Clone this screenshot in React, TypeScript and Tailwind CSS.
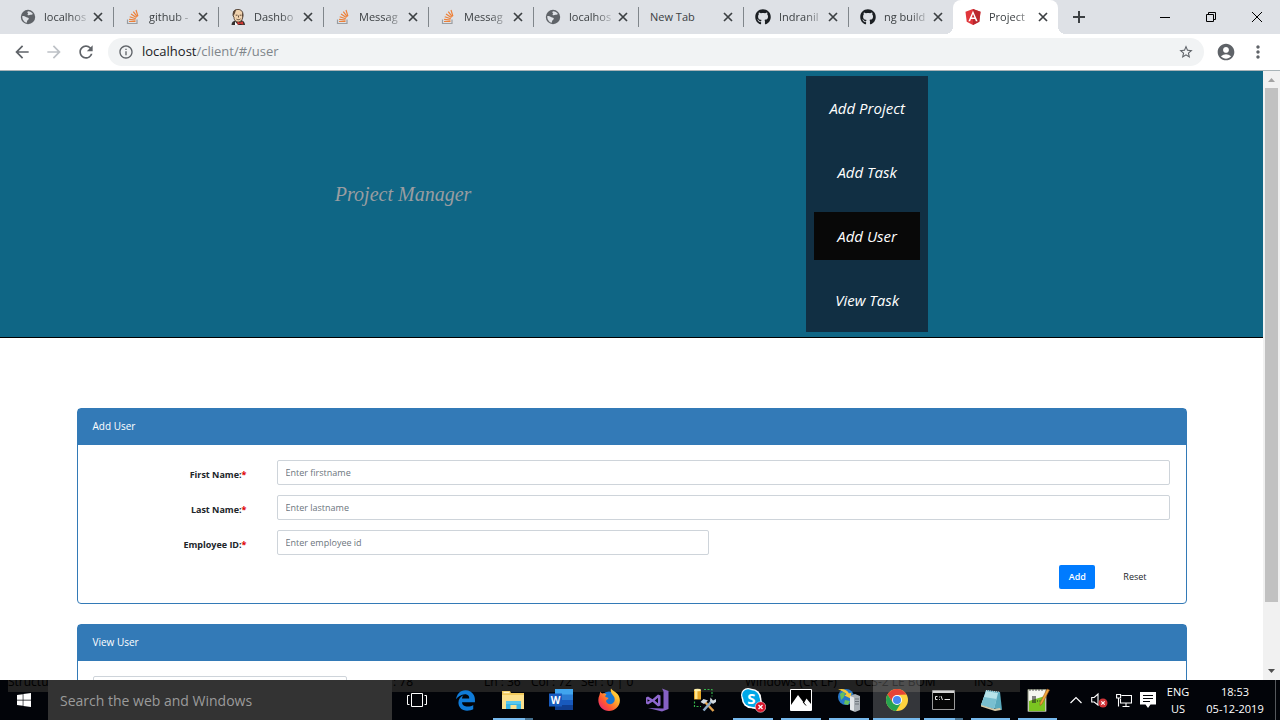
import type { ReactNode } from "react";
import { FaGithub, FaWindows, FaEdgeLegacy } from "react-icons/fa";
import {
  MdAccountCircle,
  MdArrowBack,
  MdArrowForward,
  MdInfoOutline,
  MdMoreVert,
  MdRefresh,
  MdStarBorder,
} from "react-icons/md";

function GlobeIcon() {
  return (
    <svg viewBox="0 0 16 16" className="size-4">
      <circle cx="8" cy="8" r="7.200" fill="#5f6368" />
      <path
        d="M2.300 7C3.600 6.900 5 7.200 5.800 8c.8.700 2.200.3 2.800 1.100.6.800-.2 1.600-1 2.200-.6.500-.5 1.600-.9 2.500C4 13 2 10.400 2.300 7Z M8 2.200c2 0 4 1.100 5 2.800-.7.200-1.300.9-2.100.8-1-.1-1.700.7-2.700.4-.9-.2-.8-1.100-.1-1.500.5-.4-.6-.6-.7-1.200 0-.5.200-1 .6-1.300Z"
        fill="#dee1e6"
      />
    </svg>
  );
}

function StackIcon() {
  return (
    <svg viewBox="0 0 16 16" className="size-4" fill="none">
      <path d="M2.500 10.500v4h9.500v-4" stroke="#9a9da1" strokeWidth="1.200" />
      <path
        d="M4 12.500h6.500M4.100 10.300l6.400.9M4.700 7.700l6.100 2.100M6 5l5.400 3.600M8.300 2.700l4 5.100M11 1l1.900 6.100"
        stroke="#ec8039"
        strokeWidth="1.200"
      />
    </svg>
  );
}

function JenkinsIcon() {
  return (
    <svg viewBox="0 0 16 16" className="size-4">
      <path d="M1.500 16c0-3 2-4 4-4.500l5-.5c2.500.5 4.500 2 4.500 5Z" fill="#33302e" />
      <path d="M3.500 4C3.500 1.500 5.500.4 8 .4s5 1.500 5 5-.8 7-4 7.600C6 13.500 4 11 4 8.500L3 6.500Z" fill="#f0d2ae" stroke="#4a3a2e" strokeWidth=".9" />
      <path d="M3.300 7C1.800 3.500 3.500.6 7 .4 5 1.800 5.600 3.300 4.600 5Z" fill="#5a4536" />
      <path d="M12.200 3.500c1.200 1 1.300 3 .6 5l-.8-2Z" fill="#5a4536" />
      <path d="M5.700 6.200h1.800M9.700 6.200h1.800M8.500 6.500v2M6.500 10.200c1.500.8 3 .6 4-.3" stroke="#55402f" strokeWidth=".9" fill="none" />
      <path d="m7.500 12.500 2.200 1.200 3-1.500.8 3.600-3.500-1-2.600 1.200Z" fill="#d33833" />
      <path d="m5 12.500 3 3.500H5Z" fill="#fff" />
    </svg>
  );
}

function AngularIcon() {
  return (
    <svg viewBox="0 0 16 16" className="size-4">
      <path d="m8 0 7.500 2.700-1.200 10L8 16l-6.300-3.300-1.200-10Z" fill="#e0363b" />
      <path d="M8 0v16l6.300-3.300 1.200-10Z" fill="#b9272e" />
      <path d="M8 1.800 3.400 12.200h1.700l.9-2.300h4l.9 2.300h1.700Zm0 3.200 1.400 3.500H6.600Z" fill="#fff" fillRule="evenodd" />
    </svg>
  );
}

type Tab = { title: string; icon?: ReactNode; active?: boolean };

const tabs: Tab[] = [
  { title: "localhos", icon: <GlobeIcon /> },
  { title: "github -", icon: <StackIcon /> },
  { title: "Dashbo", icon: <JenkinsIcon /> },
  { title: "Messag", icon: <StackIcon /> },
  { title: "Messag", icon: <StackIcon /> },
  { title: "localhos", icon: <GlobeIcon /> },
  { title: "New Tab" },
  { title: "Indranil", icon: <FaGithub className="size-4 text-[#1b1f23]" /> },
  { title: "ng build", icon: <FaGithub className="size-4 text-[#1b1f23]" /> },
  { title: "Project", icon: <AngularIcon />, active: true },
];

function BrowserTab({ tab, last }: { tab: Tab; last: boolean }) {
  return (
    <div
      className={
        tab.active
          ? "relative flex h-[34px] w-[105px] shrink-0 items-center rounded-t-lg bg-white pr-2 pl-3"
          : "relative flex h-[34px] w-[105px] shrink-0 items-center pr-2 pl-3"
      }
    >
      {tab.active && (
        <>
          <span className="absolute bottom-0 -left-2 size-2 bg-[radial-gradient(circle_at_0_0,transparent_8px,white_8px)]" />
          <span className="absolute -right-2 bottom-0 size-2 bg-[radial-gradient(circle_at_100%_0,transparent_8px,white_8px)]" />
        </>
      )}
      {tab.icon && <span className="mr-2 shrink-0">{tab.icon}</span>}
      <span
        className={
          tab.icon
            ? "min-w-0 flex-1 text-[11px] whitespace-nowrap text-[#3c4043] [mask-image:linear-gradient(to_right,black_55%,transparent)]"
            : "min-w-0 flex-1 text-[11px] whitespace-nowrap text-[#3c4043]"
        }
      >
        {tab.title}
      </span>
      <button type="button" aria-label={`Close ${tab.title}`} className="shrink-0 text-[#3c4043]">
        <svg viewBox="0 0 14 14" className="size-[14px]" stroke="currentColor" strokeWidth="1.700">
          <path d="m3 3 8 8M11 3l-8 8" />
        </svg>
      </button>
      {!tab.active && !last && <span className="absolute top-[7px] -right-px h-5 w-px bg-[#80868b]" />}
    </div>
  );
}

function TabStrip() {
  return (
    <div className="flex h-[34px] shrink-0 items-center bg-[#dee1e6] pl-2">
      {tabs.map((tab, i) => (
        <BrowserTab key={i} tab={tab} last={i === tabs.length - 2} />
      ))}
      <button type="button" aria-label="New tab" className="ml-3 text-[#3c4043]">
        <svg viewBox="0 0 18 18" className="size-[18px]" stroke="currentColor" strokeWidth="2">
          <path d="M9 3v12M3 9h12" />
        </svg>
      </button>
      <div className="ml-auto flex h-[28px] text-black">
        <button type="button" aria-label="Minimize" className="flex w-[46px] items-center justify-center">
          <svg viewBox="0 0 10 10" className="size-[10px]" stroke="currentColor">
            <path d="M0 5.500h10" />
          </svg>
        </button>
        <button type="button" aria-label="Restore" className="flex w-[46px] items-center justify-center">
          <svg viewBox="0 0 10 10" className="size-[10px]" stroke="currentColor" fill="none">
            <path d="M.5 2.500h7v7h-7zM2.500 2.500v-2h7v7h-2" />
          </svg>
        </button>
        <button type="button" aria-label="Close window" className="flex w-[46px] items-center justify-center">
          <svg viewBox="0 0 10 10" className="size-[10px]" stroke="currentColor">
            <path d="m0 0 10 10M10 0 0 10" />
          </svg>
        </button>
      </div>
    </div>
  );
}

function Toolbar() {
  return (
    <div className="flex h-[37px] shrink-0 items-center border-b border-[#a9b4b8] bg-white pl-3 text-[#5f6368]">
      <button type="button" aria-label="Back" className="mr-3">
        <MdArrowBack className="size-5" />
      </button>
      <button type="button" aria-label="Forward" className="mr-3 text-[#bdc1c6]">
        <MdArrowForward className="size-5" />
      </button>
      <button type="button" aria-label="Reload">
        <MdRefresh className="size-5" />
      </button>
      <div className="mr-3 ml-3 flex h-7 flex-1 items-center rounded-full bg-[#f1f3f4] pr-[10px] pl-[10px]">
        <MdInfoOutline className="mr-2 size-4" />
        <span className="flex-1 text-[13px] text-[#80868b]">
          <span className="text-[#202124]">localhost</span>/client/#/user
        </span>
        <button type="button" aria-label="Bookmark this page">
          <MdStarBorder className="size-4" />
        </button>
      </div>
      <button type="button" aria-label="Profile" className="mr-3">
        <MdAccountCircle className="size-5" />
      </button>
      <button type="button" aria-label="Menu" className="mr-3">
        <MdMoreVert className="size-5" />
      </button>
    </div>
  );
}

const links = ["Add Project", "Add Task", "Add User", "View Task"];

function SiteHeader() {
  return (
    <header className="flex items-center justify-evenly border-b border-black bg-[#0f6685] py-[5px]">
      <span className="pb-5 font-['Liberation_Serif',serif] text-[20px] text-[#9a9da1] italic">Project Manager</span>
      <nav className="bg-[#112f43]">
        <ul>
          {links.map((name) => (
            <li key={name} className="p-2">
              <a
                href="#/user"
                className={
                  name === "Add User"
                    ? "flex h-12 w-[106px] items-center justify-center bg-[#080808] text-[15px] text-white italic"
                    : "flex h-12 w-[106px] items-center justify-center text-[15px] text-white italic"
                }
              >
                {name}
              </a>
            </li>
          ))}
        </ul>
      </nav>
    </header>
  );
}

function Panel({ title, children }: { title: string; children: ReactNode }) {
  return (
    <section className="mb-5 rounded border border-[#337ab7] bg-white">
      <h2 className="h-9 bg-[#337ab7] px-[15px] text-[10px] leading-[34px] text-white">{title}</h2>
      {children}
    </section>
  );
}

const fields = [
  { id: "firstname", label: "First Name:", hint: "Enter firstname", short: false },
  { id: "lastname", label: "Last Name:", hint: "Enter lastname", short: false },
  { id: "employee", label: "Employee ID:", hint: "Enter employee id", short: true },
];

function UserForm() {
  return (
    <form className="px-4 pt-[15px] pb-[14px]" onSubmit={(e) => e.preventDefault()}>
      {fields.map((f) => (
        <div key={f.id} className="mb-[10px] flex items-center">
          <label htmlFor={f.id} className="mr-[30px] w-[153px] pt-1 text-right text-[9px] font-bold text-[#212529]">
            {f.label}
            <span className="text-[#e00000]">*</span>
          </label>
          <div className="flex-1">
            <input
              id={f.id}
              type="text"
              placeholder={f.hint}
              className={
                f.short
                  ? "block h-[25px] w-[432px] rounded-xs border border-[#ced4da] px-2 text-[9px] placeholder:text-[#6c757d]"
                  : "block h-[25px] w-full rounded-xs border border-[#ced4da] px-2 text-[9px] placeholder:text-[#6c757d]"
              }
            />
          </div>
        </div>
      ))}
      <div className="flex justify-end gap-5 pr-[15px]">
        <button type="submit" className="h-6 w-9 rounded-xs bg-[#007bff] text-[9px] font-semibold text-white">
          Add
        </button>
        <button type="reset" className="h-6 px-2 text-[9px] text-[#212529]">
          Reset
        </button>
      </div>
    </form>
  );
}

function ScrollBar() {
  return (
    <div className="flex w-[17px] shrink-0 flex-col items-center bg-[#f1f1f1]">
      <svg viewBox="0 0 17 17" className="size-[17px]">
        <path d="M5 11h7L8.500 7Z" fill="#a3a3a3" />
      </svg>
      <div className="h-[514px] w-[13px] bg-[#c1c1c1]" />
      <svg viewBox="0 0 17 17" className="mt-auto size-[17px]">
        <path d="M5 6h7L8.500 10Z" fill="#505050" />
      </svg>
    </div>
  );
}

function EditorStatus() {
  return (
    <div className="absolute top-0 left-2 flex h-3 w-[1012px] items-end overflow-hidden bg-[#222222] text-[12px] whitespace-nowrap text-black">
      <div className="flex h-5 items-center">
        <span className="w-[385px]">Structu</span>
        <span className="w-[91px]">: 78</span>
        <span className="w-[47px]">Ln : 36</span>
        <span className="w-[50px]">Col : 72</span>
        <span className="w-[164px]">Sel : 0 | 0</span>
        <span className="w-[110px]">Windows (CR LF)</span>
        <span className="w-[119px]">UCS-2 LE BOM</span>
        <span>INS</span>
      </div>
    </div>
  );
}

type TaskApp = { name: string; icon: ReactNode; running?: boolean; stacked?: boolean; current?: boolean };

const apps: TaskApp[] = [
  {
    name: "Task View",
    icon: (
      <svg viewBox="0 0 24 24" className="size-6" fill="none" stroke="#fff">
        <path d="M6.500 5.500h11v13h-11zM4.500 7.500h-2v9h2M19.500 7.500h2v9h-2" />
      </svg>
    ),
  },
  { name: "Edge", icon: <FaEdgeLegacy className="size-[21px] text-[#0f7bd8]" /> },
  {
    name: "File Explorer",
    stacked: true,
    icon: (
      <svg viewBox="0 0 24 24" className="size-6">
        <path d="M1 3h8l1 2h13v16H1Z" fill="#f0c95c" />
        <path d="M2.500 3.800h6v1.400h-6Z" fill="#fff3c4" />
        <path d="M1 7h22v14H1Z" fill="#fbe08d" />
        <path d="M5 21v-8h15v8h-4.500v-4h-6v4Z" fill="#38b5e6" />
        <path d="M5 13h15v3H5Z" fill="#58c7ee" />
      </svg>
    ),
  },
  {
    name: "Word",
    icon: (
      <svg viewBox="0 0 24 24" className="size-6">
        <path d="M6 1h18v6H6Z" fill="#41a5ee" />
        <path d="M6 6.500h18V12H6Z" fill="#2b7cd3" />
        <path d="M6 12h18v5.500H6Z" fill="#185abd" />
        <path d="M6 17h18v5H6Z" fill="#103f91" />
        <rect y="5.500" width="13" height="13" fill="#185abd" />
        <text x="6.500" y="15.500" textAnchor="middle" fontSize="10" fontWeight="700" fill="#fff">
          W
        </text>
      </svg>
    ),
  },
  {
    name: "Firefox",
    icon: (
      <svg viewBox="0 0 24 24" className="size-6">
        <defs>
          <linearGradient id="fox" x1="1" y1="0" x2="0" y2="1">
            <stop offset="0" stopColor="#fff14f" />
            <stop offset=".35" stopColor="#ffb02c" />
            <stop offset=".65" stopColor="#ff5a30" />
            <stop offset="1" stopColor="#e31587" />
          </linearGradient>
        </defs>
        <circle cx="12" cy="12.500" r="9" fill="#1675d1" />
        <path
          d="M14 .5c1 2 4 3 6.500 5.500 4 5 2.500 11-1 14-4 4-11 4-15 0C1 16.500.5 11 2.500 7l.8-3.500C4 5 4.700 5.300 5.500 5.500 7 5 8.500 5.500 9.500 6.500c-1 .5-1.500 1.500-1 2.500 1 .5 2.500.5 3 1-.5 1.500-2 1.500-2.500 3 .5 3 4 4 6.500 2.500 3-2 2.500-5.500 1-7.500C15 6 13 4 14 .5Z"
          fill="url(#fox)"
        />
      </svg>
    ),
  },
  {
    name: "Visual Studio",
    icon: (
      <svg viewBox="0 0 24 24" className="size-6">
        <path d="m17 .5 6.500 2.500v18L17 23.500 3 20l15.500.5v-17Z" fill="#8661c5" />
        <path
          d="M1 9.500 3 8.500l4.500 2.700L13 6.500l2.500 1v10l-2.500 1-5.500-4.700L3 16.500l-2-1Zm1.500 1.700v2.600L5 12.500Zm7.200 1.300 3.300 2.700v-5.400Z"
          fill="#8f68cf"
          fillRule="evenodd"
        />
      </svg>
    ),
  },
  {
    name: "Database Tools",
    icon: (
      <svg viewBox="0 0 24 24" className="size-6">
        <path d="M1 2h7v9.500H1Z" fill="#e6a726" />
        <path d="M2 2h2.500v9H2Z" fill="#ffe388" />
        <ellipse cx="4.500" cy="2" rx="3.500" ry="1.300" fill="#fff0a9" />
        <path d="M11 1.500h8v7M1.500 13.500v5H8" fill="none" stroke="#35b34a" strokeWidth="1.200" strokeDasharray="2 1.500" />
        <path d="m12 14 8.500 9" stroke="#e1a14c" strokeWidth="2.500" />
        <path d="m10.500 22.500 8-9" stroke="#8aaac7" strokeWidth="2.500" />
        <path d="m7.500 14 3-3 4.500 1.500-4 3.500Zm10-4.500 2.500 3 3-1.500v3l-3 2-3-3Z" fill="#d1d9e0" />
      </svg>
    ),
  },
  {
    name: "Skype",
    running: true,
    icon: (
      <svg viewBox="0 0 26 26" className="size-[26px]">
        <circle cx="8" cy="8" r="7" fill="#fff" />
        <circle cx="15" cy="15" r="7" fill="#fff" />
        <circle cx="11.500" cy="11.500" r="9.800" fill="#fff" />
        <circle cx="8" cy="8" r="5.800" fill="#00a8e8" />
        <circle cx="14.500" cy="14.500" r="5.800" fill="#00a8e8" />
        <circle cx="11.500" cy="11.500" r="8.200" fill="#00a8e8" />
        <text x="11.500" y="17" textAnchor="middle" fontSize="15" fontWeight="700" fill="#fff">
          S
        </text>
        <circle cx="20.500" cy="20" r="5.300" fill="#d9142b" stroke="#fff" strokeWidth=".5" />
        <path d="m18.500 18 4 4m0-4-4 4" stroke="#fff" strokeWidth="1.300" />
      </svg>
    ),
  },
  {
    name: "Photos",
    running: true,
    icon: (
      <svg viewBox="0 0 22 22" className="size-[22px]">
        <path d="M.5.500h21v21H.5Z" fill="#000" stroke="#fff" />
        <path d="M1 16 8 6l6 8 2.500-4.500L21 15v6H1Z" fill="#fff" />
        <path d="m13 13 3 3.500" stroke="#000" />
      </svg>
    ),
  },
  {
    name: "Server Manager",
    running: true,
    icon: (
      <svg viewBox="0 0 24 24" className="size-6">
        <circle cx="9" cy="9" r="8" fill="#2777c9" />
        <path d="M3 6c2-2 4-2 5-1L7 9l-3 3ZM8 12l5 1-2 4-4-1Z" fill="#67c05b" />
        <path d="M1 1.500c5-1.500 9 0 11 4l2.500-1-1 6-6-3L9.500 6C7 3.500 4 2.500 1 1.500Z" fill="#f7c83a" />
        <path d="m13 8 5-2 5 2v14l-5 2-5-2Z" fill="#aab1b6" />
        <path d="m13 8 4 1.500V23l-4-1.500Z" fill="#e3e7e9" />
        <path d="M18 11h4m-4 2.500h4M18 16h4" stroke="#6d757b" />
      </svg>
    ),
  },
  {
    name: "Chrome",
    current: true,
    icon: (
      <svg viewBox="0 0 24 24" className="size-6">
        <circle cx="12" cy="12" r="11" fill="#fdd23e" />
        <path d="M2.500 6.500A11 11 0 0 1 21.500 6.500L12 7 7.700 14.500Z" fill="#e54435" />
        <path d="M2.500 6.500A11 11 0 0 0 11 23l5.300-8.500L7.700 14.500Z" fill="#27a350" />
        <circle cx="12" cy="12" r="5" fill="#fff" />
        <circle cx="12" cy="12" r="4" fill="#4688f1" />
      </svg>
    ),
  },
  {
    name: "Command Prompt",
    stacked: true,
    icon: (
      <svg viewBox="0 0 23 20" className="h-5 w-[23px]">
        <path d="M.5.500h22v19H.5Z" fill="#050505" stroke="#9a9a9a" />
        <path d="M1 1h21v2H1Z" fill="#d5d5d5" />
        <path d="M5.500 6.500h-2v3h2M7 7h.8M7 9.500h.8M9 6l1.500 4M12.500 9.500H18" fill="none" stroke="#e6e6e6" />
      </svg>
    ),
  },
  {
    name: "Notepad",
    running: true,
    icon: (
      <svg viewBox="0 0 24 24" className="size-6">
        <path d="m7 2 14 2 2 18-21-4Z" fill="#5aa9bd" />
        <path d="m7 3 12 2-4 16L2 17Z" fill="#b7e3ea" />
        <path d="m5 9 12.500 2L15 21 2 17Z" fill="#79bfd0" />
        <path d="m2 17 13 4 6-1 1 2-6 1L2 18.500Z" fill="#d8cba9" />
        <path d="M7 2.500 20 4" stroke="#c9d0d2" strokeDasharray="1 1" />
      </svg>
    ),
  },
  {
    name: "Notepad++",
    running: true,
    icon: (
      <svg viewBox="0 0 24 26" className="h-[26px] w-6">
        <path d="M2 2.500h18v22H2Z" fill="#f5f7ef" stroke="#8d9481" />
        <path d="M3 14c5-2 11-3 16-5v15H3Z" fill="#7bc521" />
        <path d="M4 2v2m3-2v2m3-2v2m3-2v2m3-2v2" stroke="#555" />
        <path d="M7 9v7M9 9v7M11 14h1m1.500 0h1m1.500 0h1" fill="none" stroke="#222" strokeWidth="1.100" />
        <path d="m21 2 2.500 1L16 17l-2 1.500V16Z" fill="#f3a63b" stroke="#9a5a22" strokeWidth=".6" />
      </svg>
    ),
  },
];

function TaskButton({ app }: { app: TaskApp }) {
  return (
    <button
      type="button"
      aria-label={app.name}
      className={
        app.current
          ? "relative flex h-10 w-[47px] items-center justify-center bg-white/20"
          : "relative flex h-10 w-[47px] items-center justify-center nth-[-n+10]:w-12"
      }
    >
      {app.icon}
      {app.current && <span className="absolute inset-x-0 bottom-0 h-0.5 bg-[#76b9ed]" />}
      {app.running && <span className="absolute inset-x-1 bottom-0 h-0.5 bg-[#76b9ed]" />}
      {app.stacked && (
        <span className="absolute inset-x-1 bottom-0 h-0.5 border-r-8 border-[#44708f] bg-[#76b9ed]" />
      )}
    </button>
  );
}

function Taskbar() {
  return (
    <footer className="relative flex h-10 shrink-0 bg-[#020409] text-white">
      <EditorStatus />
      <button type="button" aria-label="Start" className="relative flex w-12 items-center justify-center">
        <FaWindows className="size-4" />
      </button>
      <input
        type="text"
        aria-label="Search"
        placeholder="Search the web and Windows"
        className="relative w-[344px] bg-[#333333] px-3 text-[14px] placeholder:text-[#9b9b9b]"
      />
      <div className="relative flex pl-px">
        {apps.map((app) => (
          <TaskButton key={app.name} app={app} />
        ))}
      </div>
      <div className="relative ml-auto flex items-center">
        <button type="button" aria-label="Show hidden icons" className="mr-2">
          <svg viewBox="0 0 14 10" className="h-[10px] w-[14px]" fill="none" stroke="#fff" strokeWidth="1.200">
            <path d="M1.500 8 7 2.500 12.500 8" />
          </svg>
        </button>
        <button type="button" aria-label="Volume muted" className="mr-2">
          <svg viewBox="0 0 17 16" className="h-4 w-[17px]" fill="none">
            <path d="M.7 5.500h2.500l3.800-3.500v11L3.200 10H.7Z" stroke="#fff" strokeWidth="1.100" />
            <circle cx="12" cy="11" r="4.500" fill="#d13438" />
            <path d="m10.300 9.300 3.400 3.400m0-3.400-3.400 3.400" stroke="#fff" strokeWidth="1.200" />
          </svg>
        </button>
        <button type="button" aria-label="Network" className="mr-2">
          <svg viewBox="0 0 16 16" className="size-4" fill="none" stroke="#fff" strokeWidth="1.100">
            <path d="M5.500 3.500h10v7.500H4.500V7M10 11v3M6.500 14.500h7M.6 2.500h4V6h-4zM2.500 6v8.500" />
          </svg>
        </button>
        <button type="button" aria-label="Notifications">
          <svg viewBox="0 0 16 16" className="size-4">
            <path d="M0 0h16v12.500h-5.500L8 16l-2.500-3.500H0Z" fill="#fff" />
            <path d="M3 3.500h10M3 6.500h10M3 9.500h7" stroke="#020409" />
          </svg>
        </button>
        <div className="w-[44px] text-center text-[11px] leading-[17px]">
          <div>ENG</div>
          <div>US</div>
        </div>
        <div className="w-[70px] text-center text-[11px] leading-[17px]">
          <div>18:53</div>
          <div>05-12-2019</div>
        </div>
        <span className="mr-1 ml-[5px] h-10 w-px bg-[#55585c]" />
      </div>
    </footer>
  );
}

export default function App() {
  return (
    <div className="flex h-screen flex-col overflow-hidden bg-white font-['Open_Sans','Noto_Sans',sans-serif]">
      <TabStrip />
      <Toolbar />
      <div className="flex min-h-0 flex-1">
        <div className="min-w-0 flex-1 overflow-hidden">
          <SiteHeader />
          <main className="mx-auto max-w-[1110px] pt-[70px]">
            <Panel title="Add User">
              <UserForm />
            </Panel>
            <Panel title="View User">
              <div className="p-[15px]">
                <input
                  type="text"
                  aria-label="Search users"
                  className="block h-[25px] w-[254px] rounded-xs border border-[#ced4da] px-2 text-[9px]"
                />
              </div>
            </Panel>
          </main>
        </div>
        <ScrollBar />
      </div>
      <Taskbar />
    </div>
  );
}
